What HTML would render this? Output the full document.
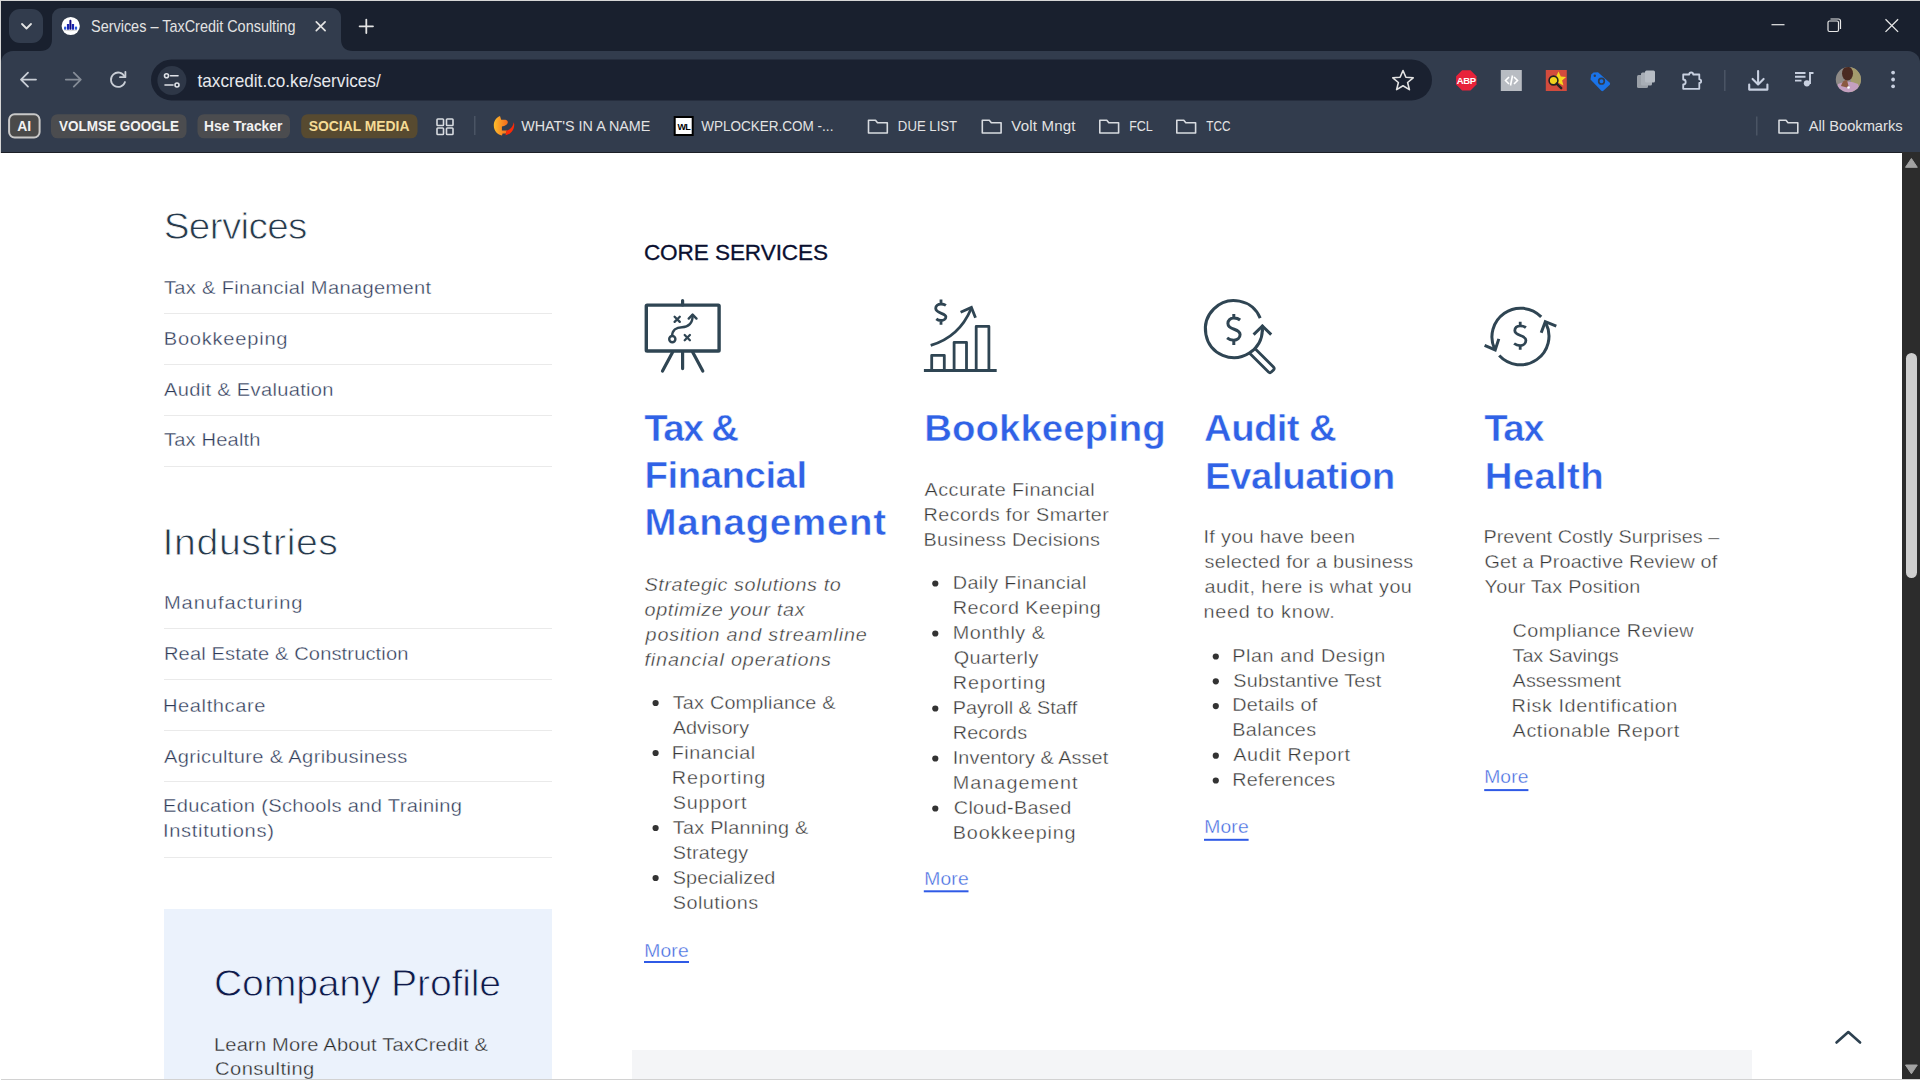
<!DOCTYPE html>
<html><head><meta charset="utf-8"><title>Services – TaxCredit Consulting</title>
<style>
html,body{margin:0;padding:0;width:1920px;height:1080px;overflow:hidden;background:#fff;font-family:"Liberation Sans",sans-serif}
.a{position:absolute}
svg text{font-family:"Liberation Sans",sans-serif;white-space:pre}
text.med{stroke:#0a1030;stroke-width:0.3px}
text.thin{stroke:#fff;stroke-width:0.35px}
text.thinh{stroke:#fff;stroke-width:0.5px}
text.thinb{stroke:#ebf2fc;stroke-width:0.35px}
</style></head>
<body>
<!-- tab strip -->
<div class="a" style="left:0;top:0;width:1920px;height:80px;background:#19202e"></div>
<div class="a" style="left:9px;top:9px;width:34px;height:34px;border-radius:11px;background:#323c4d"></div>
<!-- toolbar + bookmarks -->
<div class="a" style="left:1px;top:51px;width:1919px;height:101px;background:#323c4d;border-radius:12px 12px 0 0"></div>
<div class="a" style="left:1px;top:152px;width:1901px;height:1px;background:#1c1f26"></div>
<!-- active tab -->
<div class="a" style="left:52px;top:8px;width:289px;height:45px;background:#323c4d;border-radius:9px 9px 0 0"></div>
<svg class="a" style="left:0;top:0" width="1920" height="152">
 <path d="M40 51 Q52 51 52 39 V51 Z" fill="#323c4d"/>
 <path d="M353 51 Q341 51 341 39 V51 Z" fill="#323c4d"/>
 <!-- dropdown chevron -->
 <path d="M22 24L26.5 28.5L31 24" fill="none" stroke="#e3e3e3" stroke-width="1.8" stroke-linecap="round" stroke-linejoin="round"/>
 <!-- favicon -->
 <circle cx="70.7" cy="26" r="9.1" fill="#fff"/>
 <path d="M64 30Q70 31.5 77 30" fill="none" stroke="#c8c8c8" stroke-width="0.8"/>
 <rect x="64" y="26.4" width="2.2" height="3.3" rx="1" fill="#2a5ad8"/>
 <rect x="74.9" y="26.4" width="2.2" height="3.3" rx="1" fill="#2a5ad8"/>
 <rect x="66.9" y="24" width="2.3" height="5.7" fill="#1a24b0"/>
 <rect x="71.8" y="24" width="2.3" height="5.7" fill="#1a24b0"/>
 <rect x="69.4" y="19.8" width="2" height="9.9" rx="0.9" fill="#100a80"/>
 <!-- tab close -->
 <path d="M316.3 21.8L325.1 30.6M325.1 21.8L316.3 30.6" stroke="#e3e3e3" stroke-width="1.7" stroke-linecap="round"/>
 <!-- new tab plus -->
 <path d="M366.3 19.6V33M359.6 26.3H373" stroke="#e3e3e3" stroke-width="1.8" stroke-linecap="round"/>
 <!-- window controls -->
 <path d="M1771.5 24.7H1784.5" stroke="#e8e8e8" stroke-width="1.2"/>
 <rect x="1828" y="21" width="10.5" height="10.5" rx="1.5" fill="none" stroke="#e8e8e8" stroke-width="1.2"/>
 <path d="M1830.5 19H1838.5A2 2 0 0 1 1840.5 21V29" fill="none" stroke="#e8e8e8" stroke-width="1.2"/>
 <path d="M1885.5 19.3L1898.1 31.9M1898.1 19.3L1885.5 31.9" stroke="#e8e8e8" stroke-width="1.3"/>
 <!-- nav -->
 <path d="M21 79.6H36M28 72.6L21 79.6L28 86.6" fill="none" stroke="#c9ced6" stroke-width="1.8" stroke-linecap="round" stroke-linejoin="round"/>
 <path d="M65.8 79.6H80.8M73.8 72.6L80.8 79.6L73.8 86.6" fill="none" stroke="#858c97" stroke-width="1.8" stroke-linecap="round" stroke-linejoin="round"/>
 <path d="M124.6 76.5A7.2 7.2 0 1 0 125 82" fill="none" stroke="#c9ced6" stroke-width="1.8" stroke-linecap="round"/>
 <path d="M125.4 71.8V77.2H120" fill="none" stroke="#c9ced6" stroke-width="1.8" stroke-linecap="round" stroke-linejoin="round"/>
 <!-- omnibox -->
 <rect x="151" y="59.4" width="1281" height="41" rx="20.5" fill="#1a2130"/>
 <circle cx="171.9" cy="80.6" r="14.5" fill="#2e3747"/>
 <g fill="none" stroke="#dfe2e7" stroke-width="1.6" stroke-linecap="round">
  <circle cx="166.5" cy="75.8" r="2"/><path d="M170.5 75.8H178"/>
  <circle cx="177" cy="85" r="2"/><path d="M165 85H173"/>
 </g>
 <!-- star -->
 <path d="M1403 70.5L1405.9 77.3L1413.2 77.8L1407.6 82.5L1409.4 89.6L1403 85.7L1396.6 89.6L1398.4 82.5L1392.8 77.8L1400.1 77.3Z" fill="none" stroke="#e3e3e3" stroke-width="1.6" stroke-linejoin="round"/>
 <!-- extensions -->
 <path d="M1462.1 70.2h8.4l6 6v8.4l-6 6h-8.4l-6-6v-8.4z" fill="#e8223a"/>
 <text x="1466.3" y="84.3" text-anchor="middle" style="font-size:9.5px;font-weight:700;fill:#fff;letter-spacing:-0.3px">ABP</text>
 <rect x="1500.8" y="70" width="21" height="21" fill="#b8bcc2"/>
 <path d="M1509 77l-3.5 3.5l3.5 3.5M1514 77l3.5 3.5l-3.5 3.5M1512.5 75.5l-2 10" fill="none" stroke="#fff" stroke-width="1.6"/>
 <rect x="1545.8" y="70" width="21" height="21" fill="#d24b3d"/>
 <path d="M1558.5 71.5l2.3 5l5.3.4l-4 3.5l1.3 5.2l-4.9-2.8l-4.9 2.8l1.3-5.2l-4-3.5l5.3-.4z" fill="#f7d81e"/>
 <circle cx="1553.5" cy="80.5" r="4.4" fill="#f2d21e" stroke="#222" stroke-width="1.6"/>
 <path d="M1556.6 83.6l4.6 4.6" stroke="#222" stroke-width="2.4" stroke-linecap="round"/>
 <path d="M1593.5 72.5L1598 72.3L1609.8 82.8Q1610.5 83.8 1609.8 84.8L1603.3 90.8Q1602.3 91.5 1601.3 90.8L1590.5 79.5L1591.2 74.5Z" fill="#1a73e8"/>
 <circle cx="1594.8" cy="75.8" r="1.2" fill="#323c4d"/>
 <circle cx="1601.5" cy="81.2" r="2.8" fill="none" stroke="#323c4d" stroke-width="1.7"/>
 <rect x="1637" y="75" width="11" height="13" rx="1.5" fill="#9aa0a8"/>
 <rect x="1641" y="72.5" width="11" height="13" rx="1.5" fill="#a8aeb6"/>
 <rect x="1645" y="70.5" width="10" height="12" rx="1.5" fill="#b6bcc4"/>
 <path d="M1683.2 74.5H1689.2A2 2 0 0 1 1693.2 74.5H1699.3V79.3A1.8 1.8 0 0 1 1699.3 83V88.8H1683.2V84.5A2.5 2.5 0 0 0 1683.2 79.5Z" fill="none" stroke="#c8d0e0" stroke-width="1.8" stroke-linejoin="round"/>
 <rect x="1724" y="70" width="1.6" height="21" fill="#4a5464"/>
 <path d="M1758.1 71V84M1752.6 78.9L1758.1 84.4L1763.6 78.9M1749.2 84.6V89.6H1767.4V84.6" fill="none" stroke="#c8d0e0" stroke-width="2.1" stroke-linecap="round" stroke-linejoin="round"/>
 <path d="M1795 73H1805.5M1795 76.8H1805.5M1795 80.6H1801.5M1810 84V73H1813.5" fill="none" stroke="#c8d0e0" stroke-width="1.9"/>
 <circle cx="1806.9" cy="83.3" r="3.1" fill="#c8d0e0"/>
 <defs><clipPath id="avc"><circle cx="1848.4" cy="79.6" r="12.6"/></clipPath></defs>
 <g clip-path="url(#avc)">
  <rect x="1835" y="66" width="27" height="27" fill="#8e8a86"/>
  <rect x="1851" y="66" width="12" height="27" fill="#a39a6c"/>
  <ellipse cx="1847.5" cy="73.5" rx="5.5" ry="7" fill="#4a2a22"/>
  <path d="M1836 93L1838 84Q1848 79 1858 84L1861 93Z" fill="#c4a0c0"/>
  <path d="M1841 86Q1843 79 1847 80L1849 88Z" fill="#8a5a40"/>
  <circle cx="1848.5" cy="87.5" r="1.3" fill="#fff"/>
 </g>
 <circle cx="1893.1" cy="72.6" r="1.9" fill="#c8d0e0"/><circle cx="1893.1" cy="79.5" r="1.9" fill="#c8d0e0"/><circle cx="1893.1" cy="86.3" r="1.9" fill="#c8d0e0"/>
 <!-- bookmark chips -->
 <rect x="9.1" y="114.3" width="30.5" height="23.2" rx="5.5" fill="#4a4a4a" stroke="#c8c8c8" stroke-width="2"/>
 <rect x="51" y="114.2" width="135.5" height="24.1" rx="6.5" fill="#4b4c4f"/>
 <rect x="197.5" y="114.2" width="92.5" height="24.1" rx="6.5" fill="#4b4c4f"/>
 <rect x="301.2" y="114.2" width="116.3" height="24.1" rx="6.5" fill="#574a30"/>
 <g fill="none" stroke="#d8dbe0" stroke-width="1.6">
  <rect x="437" y="119" width="6.5" height="6.5" rx="0.8"/><rect x="446.5" y="119" width="6.5" height="6.5" rx="0.8"/>
  <rect x="437" y="128" width="6.5" height="6.5" rx="0.8"/><rect x="446.5" y="128" width="6.5" height="6.5" rx="0.8"/>
 </g>
 <rect x="474" y="116" width="1.5" height="19" fill="#4a5464"/>
 <!-- flame -->
 <defs><linearGradient id="fg" x1="0" x2="1" y1="0" y2="0"><stop offset="0" stop-color="#fdbd2c"/><stop offset="1" stop-color="#f46a1c"/></linearGradient></defs>
 <path d="M500 116.1C495.5 118 493.8 121.5 493.8 125.5C493.8 130.5 497 134.5 502 135.6L502.6 133.6L505.8 133.6L507 130.6H501.9V126.4C505 126 507.8 124.5 507.8 122C507.8 120.3 506 119.8 504 119.8H501.2Z" fill="url(#fg)"/>
 <path d="M513.8 122.2C513 127 510 129.8 506.5 130.8L505.5 135.2C510.5 134.5 514.5 130 514.2 124Z" fill="#fb2a08"/>
 <rect x="674.7" y="117" width="18" height="18" fill="#fff" stroke="#000" stroke-width="2"/>
 <text x="683.7" y="130" text-anchor="middle" style="font-size:9px;font-weight:700;fill:#000;letter-spacing:-0.8px">WL</text>
 <g fill="none" stroke="#d8dbe0" stroke-width="1.6" stroke-linejoin="round">
  <path d="M868.5 120.3H875.5L877.5 122.8H887.3V133H868.5Z"/>
  <path d="M982.3 120.3H989.3L991.3 122.8H1001.1V133H982.3Z"/>
  <path d="M1099.8 120.3H1106.8L1108.8 122.8H1118.6V133H1099.8Z"/>
  <path d="M1176.8 120.3H1183.8L1185.8 122.8H1195.6V133H1176.8Z"/>
  <path d="M1779 120.3H1786L1788 122.8H1797.8V133H1779Z"/>
 </g>
 <rect x="1756" y="116.5" width="1.5" height="19" fill="#4a5464"/>
<text transform="translate(91.00 32.00) scale(0.9032 1)" style="font-size:16px;letter-spacing:-0.000px;fill:#e3e3e3">Services – TaxCredit Consulting</text>
<text transform="translate(197.50 87.00) scale(0.982 1)" style="font-size:17.5px;letter-spacing:-0.000px;fill:#e6e8ec">taxcredit.co.ke/services/</text>
<text transform="translate(17.20 130.50) scale(0.9304 1)" style="font-size:15px;letter-spacing:-0.000px;fill:#f2f2f2;font-weight:700">AI</text>
<text transform="translate(58.90 130.50) scale(0.9007 1)" style="font-size:15px;letter-spacing:0.000px;fill:#f2f2f2;font-weight:700">VOLMSE GOOGLE</text>
<text transform="translate(204.08 130.50) scale(0.9201 1)" style="font-size:15px;letter-spacing:0.000px;fill:#f2f2f2;font-weight:700">Hse Tracker</text>
<text transform="translate(308.75 130.50) scale(0.9261 1)" style="font-size:15px;letter-spacing:-0.001px;fill:#f5dc95;font-weight:700">SOCIAL MEDIA</text>
<text transform="translate(521.25 131.00) scale(0.9561 1)" style="font-size:15px;letter-spacing:0.000px;fill:#e3e3e3">WHAT&#x27;S IN A NAME</text>
<text transform="translate(701.25 131.00) scale(0.902 1)" style="font-size:15px;letter-spacing:0.000px;fill:#e3e3e3">WPLOCKER.COM -...</text>
<text transform="translate(897.87 131.00) scale(0.8779 1)" style="font-size:15px;letter-spacing:-0.000px;fill:#e3e3e3">DUE LIST</text>
<text x="1011.25" y="131.00" style="font-size:15px;letter-spacing:0.204px;fill:#e3e3e3">Volt Mngt</text>
<text transform="translate(1129.17 131.00) scale(0.8335 1)" style="font-size:15px;letter-spacing:-0.000px;fill:#e3e3e3">FCL</text>
<text transform="translate(1206.25 131.00) scale(0.7824 1)" style="font-size:15px;letter-spacing:-0.000px;fill:#e3e3e3">TCC</text>
<text transform="translate(1808.80 131.00) scale(0.9795 1)" style="font-size:15px;letter-spacing:-0.000px;fill:#e3e3e3">All Bookmarks</text>
</svg>
<!-- window border -->
<div class="a" style="left:0;top:0;width:1920px;height:1px;background:#d6d6d6"></div>
<div class="a" style="left:0;top:0;width:1px;height:153px;background:#d6d6d6"></div>
<div class="a" style="left:1px;top:1079px;width:1919px;height:1px;background:#d2d2d2"></div>
<!-- scrollbar -->
<div class="a" style="left:1902px;top:152px;width:18px;height:927px;background:#2c2c2c"></div>
<div class="a" style="left:1905.8px;top:352.8px;width:11px;height:225px;border-radius:5.5px;background:#cfcfcf"></div>
<svg class="a" style="left:0;top:0" width="1920" height="1080">
 <path d="M1911.4 158.5L1917.3 167.3H1905.5Z" fill="#a3a3a3" stroke="#a3a3a3" stroke-width="1" stroke-linejoin="round"/>
 <path d="M1911.4 1073.8L1917.3 1065H1905.5Z" fill="#a3a3a3" stroke="#a3a3a3" stroke-width="1" stroke-linejoin="round"/>
 <!-- company profile box -->
 <rect x="164" y="909" width="388" height="170" fill="#ebf2fc"/>
 <!-- gray box -->
 <rect x="632" y="1050" width="1120" height="29" fill="#f4f5f7"/>
<rect x="164" y="313" width="388" height="1" fill="#eaeaea"/>
<rect x="164" y="364" width="388" height="1" fill="#eaeaea"/>
<rect x="164" y="415" width="388" height="1" fill="#eaeaea"/>
<rect x="164" y="466" width="388" height="1" fill="#eaeaea"/>
<rect x="164" y="628" width="388" height="1" fill="#eaeaea"/>
<rect x="164" y="679" width="388" height="1" fill="#eaeaea"/>
<rect x="164" y="730" width="388" height="1" fill="#eaeaea"/>
<rect x="164" y="781" width="388" height="1" fill="#eaeaea"/>
<rect x="164" y="857" width="388" height="1" fill="#eaeaea"/>
<circle cx="655.6" cy="703" r="3.1" fill="#333"/>
<circle cx="655.6" cy="753" r="3.1" fill="#333"/>
<circle cx="655.6" cy="828" r="3.1" fill="#333"/>
<circle cx="655.6" cy="878" r="3.1" fill="#333"/>
<circle cx="935.3" cy="583.5" r="3.1" fill="#333"/>
<circle cx="935.3" cy="633.5" r="3.1" fill="#333"/>
<circle cx="935.3" cy="708.5" r="3.1" fill="#333"/>
<circle cx="935.3" cy="758.5" r="3.1" fill="#333"/>
<circle cx="935.3" cy="808.5" r="3.1" fill="#333"/>
<circle cx="1215.8" cy="656.5" r="3.1" fill="#333"/>
<circle cx="1215.8" cy="681.3" r="3.1" fill="#333"/>
<circle cx="1215.8" cy="706.1" r="3.1" fill="#333"/>
<circle cx="1215.8" cy="755.7" r="3.1" fill="#333"/>
<circle cx="1215.8" cy="780.5" r="3.1" fill="#333"/>
<rect x="644" y="961" width="45.0" height="2" fill="#2f5ae6"/>
<rect x="923.8" y="890.3" width="44.7" height="2" fill="#2f5ae6"/>
<rect x="1204" y="838.8" width="44.6" height="2" fill="#2f5ae6"/>
<rect x="1484.2" y="789.1" width="44.2" height="2" fill="#2f5ae6"/>

<g fill="none" stroke="#2f4553" stroke-linecap="round" stroke-linejoin="round">
 <g transform="translate(636,292)">
  <rect x="10.3" y="13.1" width="72.8" height="45.9" rx="0.8" stroke-width="3.4"/>
  <path d="M46.6 8.5V13M46.6 60V76.6M36.7 60L26.5 79M56.6 60L66.8 79" stroke-width="3.2"/>
  <path d="M38.6 24.7L43.8 29.9M43.8 24.7L38.6 29.9M48.7 43L53.9 48.2M53.9 43L48.7 48.2" stroke-width="2.3"/>
  <circle cx="36.3" cy="47.1" r="3.1" stroke-width="2.4"/>
  <path d="M36.1 43.8C36.3 38.5 40 35.2 46 35.2C52.5 35.2 56.8 31 56.6 23.5" stroke-width="2.4"/>
  <path d="M52.7 26.6L56.6 22.6L60.5 26.6" stroke-width="2.4"/>
 </g>
 <g transform="translate(916,292)">
  <path d="M7.9 78.6H80.7" stroke-width="3" stroke-linecap="butt"/>
  <path d="M15.7 78.6V63.3H28.3V78.6M38.1 78.6V50.3H50.5V78.6M60.2 78.6V34.4H72.9V78.6" stroke-width="2.8" stroke-linecap="butt"/>
  <path d="M14.7 53.4C33 48 47 36 55 17" stroke-width="2.8" stroke-linecap="butt"/>
  <path d="M44.6 20.3L55.4 15.4L59.5 25.8" stroke-width="2.8" stroke-linecap="butt" stroke-linejoin="miter"/>
  <path d="M29.9 13.4C28.6 12.5 26.9 12 25 12C21.8 12 19.7 13.8 19.7 16.3C19.7 22 29.9 20.6 29.9 24.8C29.9 27 27.8 28.5 25 28.5C23 28.5 21.4 27.9 20.3 26.9M25 7.6V12M25 28.5V32.7" stroke-width="2.8" stroke-linecap="butt"/>
 </g>
 <g transform="translate(1196,292)">
  <path d="M64.2 26.1A28.5 28.5 0 1 0 66.4 37.7" stroke-width="3" stroke-linecap="butt"/>
  <path d="M66.4 38.5V34" stroke-width="3"/>
  <path d="M57.6 42.6L66.4 34L75.2 42.6" stroke-width="3" stroke-linecap="butt" stroke-linejoin="miter"/>
  <path d="M58.9 56.5L77.5 75.1A2 2 0 0 1 77.5 77.9L75.3 80.1A2 2 0 0 1 72.5 80.1L53.9 61.5" stroke-width="2.8"/>
  <path d="M44.1 28C42.6 26.7 40.4 26 37.8 26C34.2 26 31.9 28.4 31.9 31.4C31.9 38.5 44.1 36 44.1 42.6C44.1 45.9 41.3 48.2 37.8 48.2C35.2 48.2 32.8 47.3 31.1 45.9M37.8 21.9V26M37.8 48.2V53" stroke-width="3" stroke-linecap="butt"/>
 </g>
 <g transform="translate(1476,292)">
  <path d="M65.2 24.9A28.7 28.7 0 0 0 18.6 57" stroke-width="3" stroke-linecap="butt"/>
  <path d="M8.6 53.4L19.2 57.9L22.8 46.9" stroke-width="3" stroke-linecap="butt" stroke-linejoin="miter"/>
  <path d="M23.2 63.6A28.7 28.7 0 0 0 69.8 31" stroke-width="3" stroke-linecap="butt"/>
  <path d="M65.2 40.7L69.3 29.7L80.3 34.2" stroke-width="3" stroke-linecap="butt" stroke-linejoin="miter"/>
  <path d="M49.9 35.6C48.5 34.4 46.5 33.8 44.2 33.8C41 33.8 38.8 35.8 38.8 38.6C38.8 44.5 49.9 42.6 49.9 48.3C49.9 51.3 47.4 53.6 44.2 53.6C41.8 53.6 39.7 52.8 38.1 51.5M44.2 29.7V33.8M44.2 53.6V57.7" stroke-width="2.8" stroke-linecap="butt"/>
 </g>
 <path d="M1836.5 1042.5L1848.3 1032L1860.1 1042.5" stroke="#2d4150" stroke-width="2.6"/>
</g>
<text transform="translate(163.74 239.00) scale(1.06 1)" class="thin" style="font-size:36.5px;letter-spacing:-0.643px;fill:#26394b;stroke-width:0.80px">Services</text>
<text transform="translate(164.00 293.75) scale(1.06 1)" class="thin" style="font-size:19.0px;letter-spacing:0.284px;fill:#2e3a58">Tax &amp; Financial Management</text>
<text transform="translate(163.74 345.00) scale(1.06 1)" class="thin" style="font-size:19.0px;letter-spacing:0.699px;fill:#2e3a58">Bookkeeping</text>
<text transform="translate(164.00 396.00) scale(1.06 1)" class="thin" style="font-size:19.0px;letter-spacing:0.279px;fill:#2e3a58">Audit &amp; Evaluation</text>
<text transform="translate(164.00 446.00) scale(1.06 1)" class="thin" style="font-size:19.0px;letter-spacing:0.152px;fill:#2e3a58">Tax Health</text>
<text transform="translate(162.62 554.70) scale(1.06 1)" class="thin" style="font-size:37px;letter-spacing:0.563px;fill:#26394b;stroke-width:0.81px">Industries</text>
<text transform="translate(163.94 609.20) scale(1.06 1)" class="thin" style="font-size:19.0px;letter-spacing:0.868px;fill:#2e3a58">Manufacturing</text>
<text transform="translate(163.94 660.00) scale(1.06 1)" class="thin" style="font-size:19.0px;letter-spacing:0.108px;fill:#2e3a58">Real Estate &amp; Construction</text>
<text transform="translate(162.94 711.70) scale(1.06 1)" class="thin" style="font-size:19.0px;letter-spacing:0.552px;fill:#2e3a58">Healthcare</text>
<text transform="translate(164.00 762.70) scale(1.06 1)" class="thin" style="font-size:19.0px;letter-spacing:0.315px;fill:#2e3a58">Agriculture &amp; Agribusiness</text>
<text transform="translate(162.94 812.40) scale(1.06 1)" class="thin" style="font-size:19.0px;letter-spacing:0.293px;fill:#2e3a58">Education (Schools and Training</text>
<text transform="translate(162.94 837.00) scale(1.06 1)" class="thin" style="font-size:19.0px;letter-spacing:0.631px;fill:#2e3a58">Institutions)</text>
<text transform="translate(213.94 995.50) scale(1.06 1)" class="thinb" style="font-size:37px;letter-spacing:-0.181px;fill:#0e1a4a;stroke-width:0.81px">Company Profile</text>
<text transform="translate(213.94 1050.50) scale(1.06 1)" class="thinb" style="font-size:19.0px;letter-spacing:0.168px;fill:#262626">Learn More About TaxCredit &amp;</text>
<text transform="translate(215.00 1075.00) scale(1.06 1)" class="thinb" style="font-size:19.0px;letter-spacing:0.439px;fill:#262626">Consulting</text>
<text x="643.90" y="260.00" class="med" style="font-size:22.6px;letter-spacing:-0.103px;fill:#0a1030">CORE SERVICES</text>
<text transform="translate(644.30 441.00) scale(1.06 1)" class="thinh" style="font-size:36.3px;letter-spacing:-1.696px;fill:#3062e6;font-weight:700">Tax &amp;</text>
<text transform="translate(644.48 488.20) scale(1.06 1)" class="thinh" style="font-size:36.3px;letter-spacing:-0.476px;fill:#3062e6;font-weight:700">Financial</text>
<text transform="translate(644.48 535.40) scale(1.06 1)" class="thinh" style="font-size:36.3px;letter-spacing:0.675px;fill:#3062e6;font-weight:700">Management</text>
<text transform="translate(644.50 590.80) scale(1.06 1)" class="thin" style="font-size:18.7px;letter-spacing:0.559px;fill:#383838;font-style:italic">Strategic solutions to</text>
<text transform="translate(644.50 615.80) scale(1.06 1)" class="thin" style="font-size:18.7px;letter-spacing:0.612px;fill:#383838;font-style:italic">optimize your tax</text>
<text transform="translate(645.56 640.80) scale(1.06 1)" class="thin" style="font-size:18.7px;letter-spacing:0.757px;fill:#383838;font-style:italic">position and streamline</text>
<text transform="translate(644.50 665.80) scale(1.06 1)" class="thin" style="font-size:18.7px;letter-spacing:0.788px;fill:#383838;font-style:italic">financial operations</text>
<text transform="translate(672.75 708.50) scale(1.06 1)" class="thin" style="font-size:18.7px;letter-spacing:0.191px;fill:#383838">Tax Compliance &amp;</text>
<text transform="translate(672.75 733.50) scale(1.06 1)" class="thin" style="font-size:18.7px;letter-spacing:0.047px;fill:#383838">Advisory</text>
<text transform="translate(671.69 758.50) scale(1.06 1)" class="thin" style="font-size:18.7px;letter-spacing:0.502px;fill:#383838">Financial</text>
<text transform="translate(671.69 783.50) scale(1.06 1)" class="thin" style="font-size:18.7px;letter-spacing:0.924px;fill:#383838">Reporting</text>
<text transform="translate(672.75 808.50) scale(1.06 1)" class="thin" style="font-size:18.7px;letter-spacing:0.710px;fill:#383838">Support</text>
<text transform="translate(672.75 833.50) scale(1.06 1)" class="thin" style="font-size:18.7px;letter-spacing:0.250px;fill:#383838">Tax Planning &amp;</text>
<text transform="translate(672.75 858.50) scale(1.06 1)" class="thin" style="font-size:18.7px;letter-spacing:0.227px;fill:#383838">Strategy</text>
<text transform="translate(672.75 883.50) scale(1.06 1)" class="thin" style="font-size:18.7px;letter-spacing:0.128px;fill:#383838">Specialized</text>
<text transform="translate(672.75 908.50) scale(1.06 1)" class="thin" style="font-size:18.7px;letter-spacing:0.463px;fill:#383838">Solutions</text>
<text transform="translate(644.14 956.60) scale(1.06 1)" class="thin" style="font-size:18.2px;letter-spacing:0.207px;fill:#4068e0">More</text>
<text transform="translate(924.28 440.70) scale(1.06 1)" class="thinh" style="font-size:36.3px;letter-spacing:-0.014px;fill:#3062e6;font-weight:700">Bookkeeping</text>
<text transform="translate(924.60 495.60) scale(1.06 1)" class="thin" style="font-size:18.7px;letter-spacing:0.398px;fill:#383838">Accurate Financial</text>
<text transform="translate(923.54 520.60) scale(1.06 1)" class="thin" style="font-size:18.7px;letter-spacing:0.365px;fill:#383838">Records for Smarter</text>
<text transform="translate(923.54 545.60) scale(1.06 1)" class="thin" style="font-size:18.7px;letter-spacing:0.265px;fill:#383838">Business Decisions</text>
<text transform="translate(952.74 588.80) scale(1.06 1)" class="thin" style="font-size:18.7px;letter-spacing:0.329px;fill:#383838">Daily Financial</text>
<text transform="translate(952.74 613.80) scale(1.06 1)" class="thin" style="font-size:18.7px;letter-spacing:0.437px;fill:#383838">Record Keeping</text>
<text transform="translate(952.74 638.80) scale(1.06 1)" class="thin" style="font-size:18.7px;letter-spacing:0.497px;fill:#383838">Monthly &amp;</text>
<text transform="translate(953.80 663.80) scale(1.06 1)" class="thin" style="font-size:18.7px;letter-spacing:0.359px;fill:#383838">Quarterly</text>
<text transform="translate(952.74 688.80) scale(1.06 1)" class="thin" style="font-size:18.7px;letter-spacing:0.824px;fill:#383838">Reporting</text>
<text transform="translate(952.74 713.80) scale(1.06 1)" class="thin" style="font-size:18.7px;letter-spacing:-0.037px;fill:#383838">Payroll &amp; Staff</text>
<text transform="translate(952.74 738.80) scale(1.06 1)" class="thin" style="font-size:18.7px;letter-spacing:0.104px;fill:#383838">Records</text>
<text transform="translate(952.74 763.80) scale(1.06 1)" class="thin" style="font-size:18.7px;letter-spacing:0.080px;fill:#383838">Inventory &amp; Asset</text>
<text transform="translate(952.74 788.80) scale(1.06 1)" class="thin" style="font-size:18.7px;letter-spacing:0.973px;fill:#383838">Management</text>
<text transform="translate(953.80 813.80) scale(1.06 1)" class="thin" style="font-size:18.7px;letter-spacing:0.292px;fill:#383838">Cloud-Based</text>
<text transform="translate(952.74 838.80) scale(1.06 1)" class="thin" style="font-size:18.7px;letter-spacing:0.787px;fill:#383838">Bookkeeping</text>
<text transform="translate(924.14 885.30) scale(1.06 1)" class="thin" style="font-size:18.2px;letter-spacing:0.176px;fill:#4068e0">More</text>
<text transform="translate(1204.10 440.90) scale(1.06 1)" class="thinh" style="font-size:36.3px;letter-spacing:-0.651px;fill:#3062e6;font-weight:700">Audit &amp;</text>
<text transform="translate(1204.88 488.50) scale(1.06 1)" class="thinh" style="font-size:36.3px;letter-spacing:-0.433px;fill:#3062e6;font-weight:700">Evaluation</text>
<text transform="translate(1203.44 542.70) scale(1.06 1)" class="thin" style="font-size:18.7px;letter-spacing:0.321px;fill:#383838">If you have been</text>
<text transform="translate(1204.50 567.70) scale(1.06 1)" class="thin" style="font-size:18.7px;letter-spacing:0.260px;fill:#383838">selected for a business</text>
<text transform="translate(1204.50 592.70) scale(1.06 1)" class="thin" style="font-size:18.7px;letter-spacing:0.395px;fill:#383838">audit, here is what you</text>
<text transform="translate(1203.44 617.70) scale(1.06 1)" class="thin" style="font-size:18.7px;letter-spacing:0.706px;fill:#383838">need to know.</text>
<text transform="translate(1232.24 661.80) scale(1.06 1)" class="thin" style="font-size:18.7px;letter-spacing:0.526px;fill:#383838">Plan and Design</text>
<text transform="translate(1233.30 686.60) scale(1.06 1)" class="thin" style="font-size:18.7px;letter-spacing:0.182px;fill:#383838">Substantive Test</text>
<text transform="translate(1232.24 711.40) scale(1.06 1)" class="thin" style="font-size:18.7px;letter-spacing:0.265px;fill:#383838">Details of</text>
<text transform="translate(1232.24 736.20) scale(1.06 1)" class="thin" style="font-size:18.7px;letter-spacing:0.328px;fill:#383838">Balances</text>
<text transform="translate(1233.30 761.00) scale(1.06 1)" class="thin" style="font-size:18.7px;letter-spacing:0.560px;fill:#383838">Audit Report</text>
<text transform="translate(1232.24 785.80) scale(1.06 1)" class="thin" style="font-size:18.7px;letter-spacing:0.181px;fill:#383838">References</text>
<text transform="translate(1204.14 833.30) scale(1.06 1)" class="thin" style="font-size:18.2px;letter-spacing:0.207px;fill:#4068e0">More</text>
<text transform="translate(1484.20 441.20) scale(1.06 1)" class="thinh" style="font-size:36.3px;letter-spacing:-1.389px;fill:#3062e6;font-weight:700">Tax</text>
<text transform="translate(1484.68 488.80) scale(1.06 1)" class="thinh" style="font-size:36.3px;letter-spacing:0.271px;fill:#3062e6;font-weight:700">Health</text>
<text transform="translate(1483.44 542.80) scale(1.06 1)" class="thin" style="font-size:18.7px;letter-spacing:0.054px;fill:#383838">Prevent Costly Surprises –</text>
<text transform="translate(1484.50 567.80) scale(1.06 1)" class="thin" style="font-size:18.7px;letter-spacing:0.147px;fill:#383838">Get a Proactive Review of</text>
<text transform="translate(1484.50 592.80) scale(1.06 1)" class="thin" style="font-size:18.7px;letter-spacing:0.229px;fill:#383838">Your Tax Position</text>
<text transform="translate(1512.60 636.70) scale(1.06 1)" class="thin" style="font-size:18.7px;letter-spacing:0.355px;fill:#383838">Compliance Review</text>
<text transform="translate(1512.60 661.70) scale(1.06 1)" class="thin" style="font-size:18.7px;letter-spacing:-0.079px;fill:#383838">Tax Savings</text>
<text transform="translate(1512.60 686.70) scale(1.06 1)" class="thin" style="font-size:18.7px;letter-spacing:0.069px;fill:#383838">Assessment</text>
<text transform="translate(1511.54 711.70) scale(1.06 1)" class="thin" style="font-size:18.7px;letter-spacing:0.558px;fill:#383838">Risk Identification</text>
<text transform="translate(1512.60 736.70) scale(1.06 1)" class="thin" style="font-size:18.7px;letter-spacing:0.541px;fill:#383838">Actionable Report</text>
<text transform="translate(1484.14 783.00) scale(1.06 1)" class="thin" style="font-size:18.2px;letter-spacing:0.144px;fill:#4068e0">More</text>
</svg>
</body></html>
